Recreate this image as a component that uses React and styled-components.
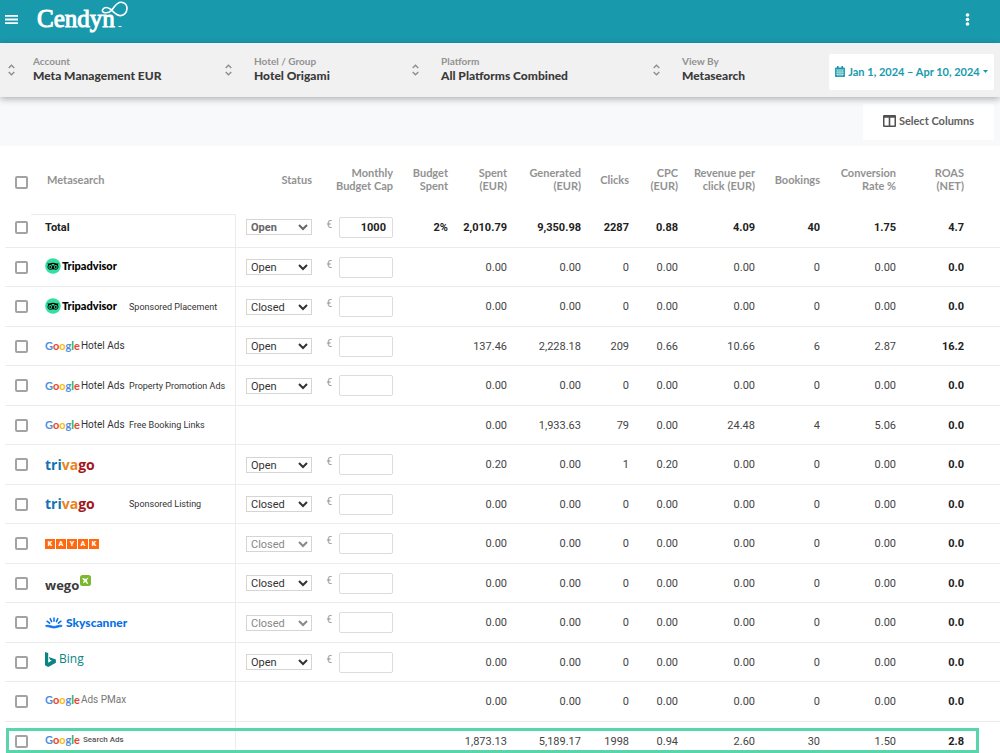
import React from 'react'
import styled, { createGlobalStyle } from 'styled-components'

const brand = 'Lato, "Open Sans", sans-serif'
const body = 'Roboto, "Liberation Sans", sans-serif'
const humanist = '"Open Sans", "Noto Sans", sans-serif'

const columns = [
    { title: 'Status', width: 76 },
    { title: 'Monthly\nBudget Cap', width: 81 },
    { title: 'Budget\nSpent', width: 55 },
    { title: 'Spent\n(EUR)', width: 59 },
    { title: 'Generated\n(EUR)', width: 74 },
    { title: 'Clicks', width: 48 },
    { title: 'CPC\n(EUR)', width: 49 },
    { title: 'Revenue per\nclick (EUR)', width: 77 },
    { title: 'Bookings', width: 65 },
    { title: 'Conversion\nRate %', width: 76 },
    { title: 'ROAS\n(NET)', width: 104 },
]

const filters = [
    { label: 'Account', value: 'Meta Management EUR' },
    { label: 'Hotel / Group', value: 'Hotel Origami' },
    { label: 'Platform', value: 'All Platforms Combined' },
    { label: 'View By', value: 'Metasearch' },
]

const empty = ['0.00', '0.00', '0', '0.00', '0.00', '0', '0.00', '0.0']

const rows = [
    { id: 'Total', total: true, status: 'Open', cap: '1000', budget: '2%', values: ['2,010.79', '9,350.98', '2287', '0.88', '4.09', '40', '1.75', '4.7'] },
    { id: 'Tripadvisor', logo: 'tripadvisor', status: 'Open', values: empty },
    { id: 'Tripadvisor Sponsored', logo: 'tripadvisor', note: 'Sponsored Placement', status: 'Closed', values: empty },
    { id: 'Google Hotel Ads', logo: 'hotelAds', status: 'Open', values: ['137.46', '2,228.18', '209', '0.66', '10.66', '6', '2.87', '16.2'] },
    { id: 'Google Promotion', logo: 'hotelAds', note: 'Property Promotion Ads', status: 'Open', values: empty },
    { id: 'Google Free', logo: 'hotelAds', note: 'Free Booking Links', values: ['0.00', '1,933.63', '79', '0.00', '24.48', '4', '5.06', '0.0'] },
    { id: 'Trivago', logo: 'trivago', status: 'Open', values: ['0.20', '0.00', '1', '0.20', '0.00', '0', '0.00', '0.0'] },
    { id: 'Trivago Sponsored', logo: 'trivago', note: 'Sponsored Listing', status: 'Closed', values: empty },
    { id: 'Kayak', logo: 'kayak', status: 'Closed', locked: true, values: empty },
    { id: 'Wego', logo: 'wego', status: 'Closed', values: empty },
    { id: 'Skyscanner', logo: 'skyscanner', status: 'Closed', locked: true, values: empty },
    { id: 'Bing', logo: 'bing', status: 'Open', values: empty },
    { id: 'Google PMax', logo: 'pmax', values: empty },
    { id: 'Google Search Ads', logo: 'searchAds', highlight: true, values: ['1,873.13', '5,189.17', '1998', '0.94', '2.60', '30', '1.50', '2.8'] },
]

const MenuIcon = () => (
    <svg width="13" height="9" viewBox="0 0 13 9" fill="#fff" aria-hidden="true">
        <path d="M0 0h13v1.8H0zM0 3.6h13v1.8H0zM0 7.2h13V9H0z" />
    </svg>
)

const Swirl = () => (
    <svg width="28" height="28" viewBox="0 0 28 28" fill="none" stroke="#fff" aria-hidden="true">
        <path d="M1.6 8.6C3 5.6 6.6 6.2 9.2 8c3.4 2.4 6 6.8 10.4 6.6 3.6-.2 6.2-3.2 6.4-6.8C26.2 4 23.6 1.2 20 1.2c-4.8 0-6.6 5-9.4 8-2 2.2-5.2 3-7.6 2.2C1.6 11 1 9.8 1.6 8.6z" strokeWidth="1.6" />
        <path d="M17.5 25.5h3" />
    </svg>
)

const DotsIcon = () => (
    <svg width="5" height="13" viewBox="0 0 5 13" fill="#fff" aria-hidden="true">
        <circle cx="2.5" cy="2" r="1.8" />
        <circle cx="2.5" cy="6.5" r="1.8" />
        <circle cx="2.5" cy="11" r="1.8" />
    </svg>
)

const SortIcon = () => (
    <svg width="7" height="12" viewBox="0 0 7 12" fill="none" stroke="#8c8c8c" strokeWidth="1.3" aria-hidden="true">
        <path d="M.7 4 3.5 1.2 6.3 4M.7 8l2.8 2.8L6.3 8" />
    </svg>
)

const CalendarIcon = () => (
    <svg width="10" height="11" viewBox="0 0 10 11" aria-hidden="true">
        <path fill="#199aac" d="M1 1.4h1V0h1.6v1.4h2.8V0H8v1.4h1a1 1 0 0 1 1 1V10a1 1 0 0 1-1 1H1a1 1 0 0 1-1-1V2.4a1 1 0 0 1 1-1z" />
        <path stroke="#fff" strokeWidth=".6" d="M.7 3.9h8.6M.7 6.1h8.6M.7 8.3h8.6M2.9 3.9v6.5M5 3.9v6.5M7.1 3.9v6.5" />
    </svg>
)

const CaretIcon = () => (
    <svg width="5" height="3" viewBox="0 0 5 3" fill="#199aac" aria-hidden="true">
        <path d="M0 0h5L2.5 3z" />
    </svg>
)

const ColumnsIcon = () => (
    <svg width="13" height="12" viewBox="0 0 13 12" aria-hidden="true">
        <rect width="13" height="12" rx="1" fill="#505050" />
        <path fill="#fff" d="M1.5 2.8h4.2v7.7H1.5zM7.3 2.8h4.2v7.7H7.3z" />
    </svg>
)

const OwlIcon = () => (
    <svg width="16" height="16" viewBox="0 0 16 16" aria-hidden="true">
        <circle cx="8" cy="8" r="7.8" fill="#34e0a1" />
        <path d="M2.2 5.6h2.4C6.4 4.3 9.6 4.3 11.4 5.6h2.4l-1 1.2c1.3 1.9.6 4.7-1.9 5-1 .1-1.7-.2-2.3-.8L8 12l-.6-1c-.6.6-1.3.9-2.3.8-2.5-.3-3.2-3.1-1.9-5z" />
        <circle cx="5.3" cy="8.9" r="1.9" fill="#34e0a1" />
        <circle cx="10.7" cy="8.9" r="1.9" fill="#34e0a1" />
        <circle cx="5.3" cy="8.9" r="1" />
        <circle cx="10.7" cy="8.9" r="1" />
        <path d="M6.3 6.3C7.3 5.9 8.7 5.9 9.7 6.3L8 8z" fill="#34e0a1" />
    </svg>
)

const WegoIcon = () => (
    <svg width="11" height="11" viewBox="0 0 11 11" aria-hidden="true">
        <rect width="11" height="11" rx="2.5" fill="#7cb82f" />
        <path fill="#fff" d="M8.7 2.2 6.8 5.3 8 8.8l-.8.3-2-2.4-1.6 1.6-.7-.7 1.2-1.9-1.9-2 .7-.6 2.8.9z" />
    </svg>
)

const SunIcon = () => (
    <svg width="18" height="12" viewBox="0 0 18 12" fill="none" stroke="#0770e3" strokeLinecap="round" aria-hidden="true">
        <path strokeWidth="1.5" d="M9 1v3.2M5.2 1.6l1.4 3M12.8 1.6l-1.4 3M2 4.2l2.6 2M16 4.2l-2.6 2" />
        <path fill="#0770e3" strokeWidth=".8" d="M1 8.4c3.6-.8 5.2 1 8 1s4.4-1.8 8-1l-.4 1.2c-2.4-.2-4.8 1.4-7.6 1.4S3.8 9.4 1.4 9.6z" />
    </svg>
)

const BingIcon = () => (
    <svg width="11" height="15" viewBox="0 0 11 15" aria-hidden="true">
        <path fill="#0c8484" d="M0 0l3.2 1.1v9.6L6.8 8.5 5 7.7 3.9 5l7 2.5v3.3L3.2 15 0 13.2z" />
    </svg>
)

const Google = () => (
    <Word $size={11} $weight={700}>
        <Ink $color="#4a90e2">G</Ink>
        <Ink $color="#ea4335">o</Ink>
        <Ink $color="#fbbc05">o</Ink>
        <Ink $color="#4a90e2">g</Ink>
        <Ink $color="#34a853">l</Ink>
        <Ink $color="#ea4335">e</Ink>
    </Word>
)

const logos = {
    tripadvisor: () => (
        <Logo $gap={1} $lift={2}>
            <OwlIcon />
            <Word $size={11} $weight={900} $color="#000">Tripadvisor</Word>
        </Logo>
    ),
    hotelAds: () => (
        <Logo $gap={1}>
            <Google />
            <Word $size={10} $color="#333" $family={body}>Hotel Ads</Word>
        </Logo>
    ),
    trivago: () => (
        <Logo>
            <Word $size={14} $weight={700} $family={humanist}>
                <Ink $color="#1272b6">tri</Ink>
                <Ink $color="#e98420">va</Ink>
                <Ink $color="#a4161a">go</Ink>
            </Word>
        </Logo>
    ),
    kayak: () => (
        <Logo $gap={1}>
            {'KAYAK'.split('').map((letter, i) => <Tile key={i}>{letter}</Tile>)}
        </Logo>
    ),
    wego: () => (
        <Logo $gap={1} $drop={4}>
            <Word $size={13} $weight={700} $color="#3b3b3b" $family={humanist}>wego</Word>
            <Raised><WegoIcon /></Raised>
        </Logo>
    ),
    skyscanner: () => (
        <Logo $gap={3}>
            <SunIcon />
            <Word $size={12} $weight={900} $color="#0770e3">Skyscanner</Word>
        </Logo>
    ),
    bing: () => (
        <Logo $gap={3} $lift={6}>
            <BingIcon />
            <Word $size={12} $color="#0c8484" $family={humanist}>Bing</Word>
        </Logo>
    ),
    pmax: () => (
        <Logo $gap={1} $lift={4}>
            <Google />
            <Word $size={10} $color="#777" $family={body}>Ads PMax</Word>
        </Logo>
    ),
    searchAds: () => (
        <Logo $gap={3} $lift={2}>
            <Google />
            <Word $size={8} $weight={500} $color="#555" $family={body}>Search Ads</Word>
        </Logo>
    ),
}

const MetaRow = ({ row }) => (
    <Row $total={row.total} $highlight={row.highlight}>
        <CheckCell>
            <Check aria-label={`Select ${row.id}`} />
        </CheckCell>
        <NameCell $total={row.total}>
            {row.total ? 'Total' : (
                <Name>
                    {logos[row.logo]()}
                    {row.note && <Note>{row.note}</Note>}
                </Name>
            )}
        </NameCell>
        <Cell>
            {row.status && (
                <Status aria-label={`${row.id} status`} defaultValue={row.status} disabled={row.locked} $total={row.total}>
                    <option>Open</option>
                    <option>Closed</option>
                </Status>
            )}
        </Cell>
        <Cell>
            {row.status && (
                <Cap>
                    <span>€</span>
                    <CapInput aria-label={`${row.id} monthly budget cap`} defaultValue={row.cap} />
                </Cap>
            )}
        </Cell>
        <Cell>{row.budget}</Cell>
        {row.values.map((value, i) => <Cell key={i}>{value}</Cell>)}
    </Row>
)

const App = () => (
    <>
        <GlobalStyle />
        <TopBar>
            <IconButton aria-label="Menu"><MenuIcon /></IconButton>
            <Brand href="#">
                Cendyn
                <SwirlBox><Swirl /></SwirlBox>
            </Brand>
            <IconButton aria-label="More"><DotsIcon /></IconButton>
        </TopBar>
        <FilterBar>
            {filters.map(({ label, value }) => (
                <Filter key={label}>
                    <SortIcon />
                    <FilterText>
                        <FilterLabel>{label}</FilterLabel>
                        <FilterValue>{value}</FilterValue>
                    </FilterText>
                </Filter>
            ))}
            <DateButton>
                <CalendarIcon />
                Jan 1, 2024 – Apr 10, 2024
                <CaretIcon />
            </DateButton>
        </FilterBar>
        <Actions>
            <ColumnsButton>
                <ColumnsIcon />
                Select Columns
            </ColumnsButton>
        </Actions>
        <Main>
            <Table>
                <colgroup>
                    <Col $width={26} />
                    <Col $width={205} />
                    {columns.map(({ title, width }) => <Col key={title} $width={width} />)}
                </colgroup>
                <thead>
                    <tr>
                        <HeadCell $left><Check aria-label="Select all" /></HeadCell>
                        <HeadCell $left>Metasearch</HeadCell>
                        {columns.map(({ title }) => <HeadCell key={title}>{title}</HeadCell>)}
                    </tr>
                </thead>
                <tbody>
                    {rows.map((row) => <MetaRow key={row.id} row={row} />)}
                </tbody>
            </Table>
        </Main>
    </>
)

const GlobalStyle = createGlobalStyle`
    * {
        box-sizing: border-box;
    }
    body {
        margin: 0;
        background: #fff;
        color: #444;
        font-family: ${body};
        font-size: 11px;
    }
    button, select, input {
        margin: 0;
        font: inherit;
        color: inherit;
    }
    svg {
        display: block;
        flex: none;
    }
`

const TopBar = styled.header`
    display: flex;
    align-items: center;
    height: 43px;
    padding: 0 30px 4px 5px;
    background: #199aac;
`

const IconButton = styled.button`
    padding: 0;
    border: 0;
    background: none;
    cursor: pointer;
`

const Brand = styled.a`
    position: relative;
    margin: 0 auto 0 19px;
    padding-bottom: 2px;
    color: #fff;
    font-family: "Liberation Serif", serif;
    font-size: 25px;
    line-height: 28px;
    -webkit-text-stroke: 1px #fff;
    text-decoration: none;
`

const SwirlBox = styled.span`
    position: absolute;
    top: -4px;
    right: -14px;
`

const FilterBar = styled.section`
    position: relative;
    display: grid;
    grid-template-columns: 221fr 187fr 241fr 180fr 171fr;
    align-items: center;
    height: 54px;
    background: #f1f1f1;
    box-shadow: 0 2px 7px rgba(0, 0, 0, 0.3);
`

const Filter = styled.button`
    display: flex;
    align-items: center;
    gap: 22px;
    padding: 0 0 0 4px;
    border: 0;
    background: none;
    font-family: ${brand};
    text-align: left;
    cursor: pointer;
    &:first-child {
        gap: 18px;
        padding-left: 8px;
    }
`

const FilterText = styled.span`
    padding-bottom: 4px;
`

const FilterLabel = styled.span`
    display: block;
    color: #929292;
    font-size: 10px;
    font-weight: 700;
    line-height: 14px;
`

const FilterValue = styled.span`
    display: block;
    color: #3a3a3a;
    font-size: 12px;
    font-weight: 900;
    line-height: 15px;
`

const WhiteButton = styled.button`
    display: flex;
    align-items: center;
    justify-content: center;
    height: 36px;
    padding: 0 0 2px;
    border: 0;
    border-radius: 2px;
    background: #fff;
    font-family: ${brand};
    font-size: 11px;
    font-weight: 700;
    white-space: nowrap;
    cursor: pointer;
`

const DateButton = styled(WhiteButton)`
    gap: 3px;
    margin: 4px 6px 0 0;
    color: #199aac;
`

const Actions = styled.section`
    display: flex;
    align-items: center;
    justify-content: flex-end;
    height: 49px;
    padding-right: 6px;
    background: #f8f9fb;
`

const ColumnsButton = styled(WhiteButton)`
    gap: 3px;
    width: 131px;
    color: #606060;
`

const Main = styled.main`
    padding-left: 5px;
`

const Table = styled.table`
    width: 100%;
    table-layout: fixed;
    border-collapse: separate;
    border-spacing: 0;
`

const Col = styled.col`
    width: ${({ $width }) => $width}px;
`

const HeadCell = styled.th`
    height: 68px;
    padding: 0 0 2px;
    color: #929292;
    font-family: ${brand};
    font-size: 11px;
    font-weight: 700;
    line-height: 13px;
    text-align: ${({ $left }) => ($left ? 'left' : 'right')};
    white-space: pre-line;
    &:nth-child(1) {
        padding: 4px 0 0 10px;
    }
    &:nth-child(2) {
        padding-left: 16px;
    }
    &:last-child {
        padding-right: 36px;
    }
`

const Cell = styled.td`
    padding: 0;
    border-bottom: 1px solid #ececec;
    text-align: right;
    &:last-child {
        padding-right: 36px;
        color: #222;
        font-weight: 700;
    }
`

const CheckCell = styled(Cell)`
    padding-left: 10px;
    text-align: left;
`

const NameCell = styled(Cell)`
    padding-left: 14px;
    border-right: 1px solid #ececec;
    border-top: ${({ $total }) => ($total ? '1px solid #ececec' : '0')};
    text-align: left;
`

const Row = styled.tr`
    position: relative;
    height: ${({ $total }) => ($total ? 34 : 40)}px;
    color: ${({ $total }) => ($total ? '#222' : '#444')};
    font-weight: ${({ $total }) => ($total ? 700 : 400)};
    &:nth-child(even) {
        height: 39px;
    }
    && > td {
        padding-bottom: ${({ $total }) => ($total ? 7 : 0)}px;
    }
    ${({ $highlight }) => $highlight && `
        &&:nth-child(even) {
            height: 31px;
        }
        && > td {
            padding-top: 7px;
            border-bottom: 0;
        }
        &::after {
            content: '';
            position: absolute;
            inset: 6px 21px 0 1px;
            border: 3px solid #58d5a9;
            pointer-events: none;
        }
    `}
`

const Check = styled.input.attrs({ type: 'checkbox' })`
    display: block;
    width: 13px;
    height: 13px;
    appearance: none;
    border: 2px solid #a3a3a3;
    border-radius: 2px;
    background: #fff;
`

const Name = styled.div`
    display: flex;
    align-items: center;
`

const Note = styled.span`
    color: #333;
    font-size: 9px;
    white-space: nowrap;
`

const Logo = styled.span`
    display: flex;
    align-items: center;
    gap: ${({ $gap }) => $gap || 0}px;
    width: 84px;
    height: 20px;
    margin-top: ${({ $drop }) => $drop || 0}px;
    margin-bottom: ${({ $lift }) => $lift || 0}px;
    white-space: nowrap;
`

const Word = styled.span`
    color: ${({ $color }) => $color};
    font-family: ${({ $family }) => $family || brand};
    font-size: ${({ $size }) => $size}px;
    font-weight: ${({ $weight }) => $weight || 400};
    line-height: 20px;
`

const Ink = styled.span`
    color: ${({ $color }) => $color};
`

const Tile = styled.span`
    width: 10px;
    height: 10px;
    background: #ff690f;
    color: #fff;
    font-size: 7px;
    font-weight: 900;
    line-height: 10px;
    text-align: center;
`

const Raised = styled.span`
    align-self: flex-start;
`

const Status = styled.select`
    width: 66px;
    height: 16px;
    padding: 0;
    border: 1px solid #d5d5d5;
    border-radius: 0;
    background: #fff;
    color: ${({ $total }) => ($total ? '#666' : '#333')};
    vertical-align: middle;
    &:disabled {
        color: #888;
        opacity: 1;
    }
`

const Cap = styled.span`
    display: flex;
    align-items: center;
    justify-content: flex-end;
    gap: 7px;
    span {
        padding-bottom: 6px;
        color: #999;
        font-size: 10px;
        font-weight: 400;
    }
`

const CapInput = styled.input`
    width: 54px;
    height: 21px;
    padding: 0 6px;
    border: 1px solid #dcdcdc;
    border-radius: 2px;
    background: #fff;
    text-align: right;
`

export default App
